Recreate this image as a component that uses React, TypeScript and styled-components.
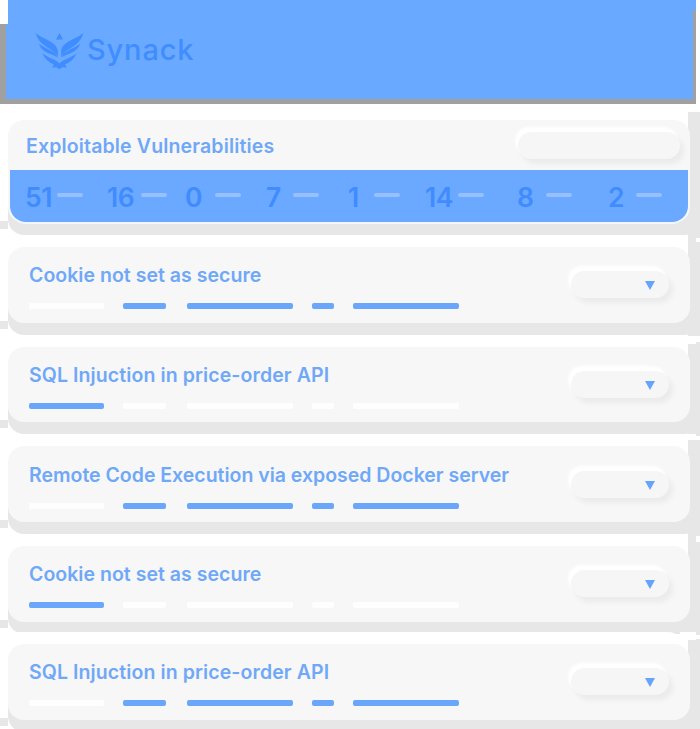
import React from 'react';
import styled, { createGlobalStyle } from 'styled-components';

const Global = createGlobalStyle`
  * { box-sizing: border-box; }
  html, body { margin: 0; background: #fff; }
  body { width: 700px; height: 729px; overflow: hidden; font-family: Inter, sans-serif; }
`;

const Page = styled.main`
  width: 700px;
  height: 729px;
  overflow: hidden;
  background: linear-gradient(#e7e7e7, #e7e7e7) 688px 112px / 12px 617px no-repeat #fff;
`;

const Header = styled.header`
  width: 696px;
  height: 104px;
  padding: 0 0 0 35px;
  display: flex;
  align-items: center;
  background:
    linear-gradient(#fff, #fff) 0 0 / 8px 24px no-repeat,
    linear-gradient(#69a9ff, #69a9ff) 8px 0 / 685px 99px no-repeat,
    linear-gradient(#69a9ff, #69a9ff) 6px 24px / 686px 75px no-repeat,
    linear-gradient(#69a9ff, #69a9ff) 0 0 / 696px 10px no-repeat,
    #a0a0a0;
`;

const Logo = styled.svg`
  display: block;
  width: 49px;
  height: 38px;
  margin-top: -2px;
  fill: #3f8dff;
`;

const Brand = styled.span`
  margin: -5px 0 0 3px;
  color: #3f8dff;
  font-size: 29px;
  line-height: 36px;
  font-weight: 500;
  letter-spacing: 0.85px;
`;

const Card = styled.section<{ $gap: number; $height: number; $notch?: string }>`
  position: relative;
  width: 682px;
  height: ${p => p.$height}px;
  margin: ${p => p.$gap}px 0 0 8px;
  border-radius: 16px;
  background: #f7f7f7;
  box-shadow: 10px 12px 0 #e7e7e7, 0 12px 0 #e7e7e7, 0 5px 0 #e7e7e7, -6px -12px 0 #fff;
  &::before {
    content: '';
    position: absolute;
    left: -8px;
    bottom: -6px;
    width: 8px;
    height: 8px;
    background: #e7e7e7;
  }
  &::after {
    content: '';
    position: absolute;
    left: 672px;
    top: -12px;
    width: 20px;
    height: 12px;
    background: ${p => p.$notch || 'none'};
  }
`;

const SummaryHead = styled.div`
  height: 50px;
  padding: 2px 10px 0 18px;
  display: flex;
  align-items: center;
  justify-content: space-between;
`;

const Title = styled.h2<{ $spacing: number }>`
  margin: 0;
  color: #70a8f8;
  font-size: 19.5px;
  line-height: 26px;
  font-weight: 560;
  letter-spacing: ${p => p.$spacing}px;
  white-space: nowrap;
`;

const Pill = styled.div<{ $width: number }>`
  width: ${p => p.$width}px;
  height: 27px;
  border-radius: 14px;
  display: flex;
  align-items: center;
  justify-content: flex-end;
  padding: 2px 14px 0 0;
  background: #f6f6f6;
  box-shadow: -3px -5px 3px #fff, 4px 5px 5px #ebebeb;
`;

const Arrow = styled.svg`
  width: 10px;
  height: 9px;
  fill: #65a4fb;
`;

const Counts = styled.div`
  display: grid;
  grid-template-columns: 83px 78px 81px 82px 77px 92px 91px 1fr;
  align-items: center;
  width: 678px;
  height: 52.5px;
  margin-left: 2px;
  padding-left: 14px;
  border-radius: 0 0 16px 16px;
  background: #6aa9ff;
  box-shadow: 0 2px 0 #f2f7ff;
`;

const Count = styled.div<{ $dash: number; $offset: number }>`
  display: grid;
  grid-template-columns: ${p => p.$dash}px 26px;
  align-items: center;
  color: #408cff;
  font-size: 26.5px;
  line-height: 34px;
  font-weight: 600;
  letter-spacing: -0.4px;
  span { padding-left: ${p => p.$offset}px; margin-top: 2px; }
  &::after {
    content: '';
    height: 4px;
    margin-top: -1px;
    border-radius: 2px;
    background: #98c0ff;
  }
`;

const FindingBody = styled.div`
  height: 100%;
  padding: 0 21px;
  display: flex;
  align-items: center;
  justify-content: space-between;
`;

const Bars = styled.div`
  display: grid;
  grid-template-columns: 75px 43px 106px 22px 106px;
  column-gap: 19px;
  margin-top: 14px;
  padding-top: 1px;
`;

const Bar = styled.i<{ $active: boolean }>`
  height: 6px;
  border-radius: 2px;
  background: ${p => (p.$active ? '#6aa7fa' : '#fefefe')};
  &:nth-child(n + 3) {
    transform: translateX(2px);
  }
`;

const FindingText = styled.div`
  padding-top: 2px;
`;

const counts = [
  { value: 51, dash: 33, offset: 1 },
  { value: 16, dash: 34, offset: 0 },
  { value: 0, dash: 30, offset: 0 },
  { value: 7, dash: 27, offset: 0 },
  { value: 1, dash: 26, offset: 0 },
  { value: 14, dash: 33, offset: 0 },
  { value: 8, dash: 29, offset: 0 },
  { value: 2, dash: 28, offset: 0 },
];

const notch = (innerTop: number, innerHeight: number, outerTop: number, outerHeight: number) =>
  `linear-gradient(#fff, #fff) 0 ${innerTop}px / 16px ${innerHeight}px no-repeat,
   linear-gradient(#fff, #fff) 16px ${outerTop}px / 4px ${outerHeight}px no-repeat`;

const findings = [
  { title: 'Cookie not set as secure', gap: 24, height: 75.5, first: false, spacing: 0.03, notch: notch(0, 0, 3, 4) },
  { title: 'SQL Injuction in price-order API', gap: 24, height: 75.5, first: true, spacing: 0.1, notch: notch(1, 8, 1, 6) },
  { title: 'Remote Code Execution via exposed Docker server', gap: 24, height: 76, first: false, spacing: -0.01, notch: notch(0, 6, 2, 4) },
  { title: 'Cookie not set as secure', gap: 23.5, height: 76, first: true, spacing: 0.03, notch: notch(0, 0, 2, 6) },
  { title: 'SQL Injuction in price-order API', gap: 22, height: 76, first: false, spacing: 0.1, notch: notch(0, 8, 3, 4) },
];

function SynackMark() {
  return (
    <Logo viewBox="0 0 49 38">
      <path d="M24.500 1 28 7.500h-7Z" />
      <path d="M.5 1C7 7 21 9 22.800 18.500V25C20 19 14 17 9.500 13.500 4.500 10 2 6 .5 1Z" />
      <path d="M48.500 1C42 7 28 9 26.200 18.500V25c2.800-6 8.800-8 13.300-11.500C44.500 10 47 6 48.500 1Z" />
      <path d="M4 11.500c6 6 16 6 18.500 14-5-4-16-4-18.500-14Z" />
      <path d="M45 11.500c-6 6-16 6-18.500 14 5-4 16-4 18.500-14Z" />
      <path d="M7.500 21C12 26 21 27 24.500 31.500 28 27 37 26 41.500 21c-2 6-6 9-11.500 11.500l2 3-4.500-.2-3 2-3-2-4.500.2 2-3C13.500 30 9.500 27 7.500 21Z" />
    </Logo>
  );
}

export default function App() {
  return (
    <>
      <Global />
      <Page>
        <Header><SynackMark /><Brand>Synack</Brand></Header>
        <Card $gap={15.5} $height={103.5}>
          <SummaryHead>
            <Title $spacing={0.15}>Exploitable Vulnerabilities</Title>
            <Pill $width={162} />
          </SummaryHead>
          <Counts>
            {counts.map(c => (
              <Count key={c.value} $dash={c.dash} $offset={c.offset}><span>{c.value}</span></Count>
            ))}
          </Counts>
        </Card>
        {findings.map((f, i) => (
          <Card key={i} $gap={f.gap} $height={f.height} $notch={f.notch}>
            <FindingBody>
              <FindingText>
                <Title $spacing={f.spacing}>{f.title}</Title>
                <Bars>
                  <Bar $active={f.first} />
                  {[1, 2, 3, 4].map(n => <Bar key={n} $active={!f.first} />)}
                </Bars>
              </FindingText>
              <Pill $width={98}><Arrow viewBox="0 0 10 9"><path d="M0 0h10L5 9Z" /></Arrow></Pill>
            </FindingBody>
          </Card>
        ))}
      </Page>
    </>
  );
}
